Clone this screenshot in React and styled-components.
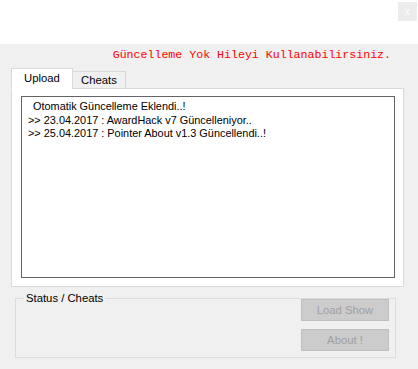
import React, { useState } from 'react';
import styled, { createGlobalStyle } from 'styled-components';

const GlobalStyle = createGlobalStyle`
  html, body {
    margin: 0;
    padding: 0;
    background: #f0f0f0;
  }
  body {
    font-family: "Liberation Sans", Arial, sans-serif;
    font-size: 11px;
    color: #000;
  }
`;

const Window = styled.div`
  width: 418px;
  height: 369px;
  display: flex;
  flex-direction: column;
  overflow: hidden;
`;

const TitleBar = styled.div`
  height: 44px;
  background: #fff;
  display: flex;
  justify-content: flex-end;
  align-items: flex-start;
  padding: 2px 1px 0 0;
  box-sizing: border-box;
`;

const CloseButton = styled.div`
  width: 19px;
  height: 19px;
  background: #ececec;
  color: #fbfbfb;
  font-size: 11px;
  display: flex;
  align-items: center;
  justify-content: center;
  line-height: 1;
`;

const Body = styled.div`
  flex: 1;
  background: #f0f0f0;
  display: flex;
  flex-direction: column;
  padding: 0 14px 0 11px;
`;

const Notice = styled.div`
  font-family: "Liberation Mono", "Courier New", monospace;
  font-size: 11.6px;
  color: #ff0000;
  text-align: right;
  padding: 4px 13px 0 0;
  height: 18px;
  line-height: 14px;
`;

const TabStrip = styled.div`
  display: flex;
  align-items: flex-end;
  height: 22px;
  position: relative;
  z-index: 1;
`;

const Tab = styled.div`
  box-sizing: border-box;
  height: ${p => (p.$active ? '21px' : '18px')};
  width: ${p => p.$w}px;
  background: ${p => (p.$active ? '#fff' : '#f0f0f0')};
  border: 1px solid #d9d9d9;
  border-bottom: ${p => (p.$active ? '1px solid #fff' : '1px solid #d9d9d9')};
  margin-bottom: -1px;
  margin-left: ${p => (p.$active ? '0' : '-1px')};
  display: flex;
  align-items: center;
  justify-content: center;
  padding-bottom: ${p => (p.$active ? '2px' : '0')};
  font-size: 11.3px;
  cursor: default;
`;

const Panel = styled.div`
  box-sizing: border-box;
  height: 199px;
  background: #fff;
  border: 1px solid #d9d9d9;
  padding: 7px 8px 8px 9px;
  display: flex;
`;

const LogBox = styled.div`
  flex: 1;
  border: 1px solid #646464;
  padding: 3px 6px 0 6px;
  font-size: 10.9px;
  line-height: 13.5px;
`;

const LogLine = styled.div`
  white-space: pre;
  padding-left: ${p => (p.$indent ? '5px' : '0')};
`;

const Group = styled.fieldset`
  box-sizing: border-box;
  margin: 5px 8px 0 4px;
  height: 66px;
  border: 1px solid #dcdcdc;
  padding: 0 6px 5px 6px;
  display: flex;
  flex-direction: column;
  align-items: flex-end;
  gap: 8px;
`;

const Legend = styled.legend`
  font-size: 11.3px;
  padding: 0 2px;
  margin-left: 2px;
`;

const GrayButton = styled.div`
  box-sizing: border-box;
  width: 88px;
  height: 22px;
  background: #cccccc;
  border: 1px solid #bfbfbf;
  color: #a0a0a0;
  font-size: 11.3px;
  display: flex;
  align-items: center;
  justify-content: center;
  margin-top: ${p => (p.$first ? '-5px' : '0')};
`;

const logs = [
  { text: 'Otomatik Güncelleme Eklendi..!', indent: true },
  { text: '>> 23.04.2017 : AwardHack v7 Güncelleniyor..' },
  { text: '>> 25.04.2017 : Pointer About v1.3 Güncellendi..!' },
];

export default function App() {
  const [tab, setTab] = useState('upload');
  return (
    <>
      <GlobalStyle />
      <Window>
        <TitleBar>
          <CloseButton>x</CloseButton>
        </TitleBar>
        <Body>
          <Notice>Güncelleme Yok Hileyi Kullanabilirsiniz.</Notice>
          <TabStrip>
            <Tab $w={62} $active={tab === 'upload'} onClick={() => setTab('upload')}>Upload</Tab>
            <Tab $w={54} $active={tab === 'cheats'} onClick={() => setTab('cheats')}>Cheats</Tab>
          </TabStrip>
          <Panel>
            <LogBox>
              {logs.map((l, i) => (
                <LogLine key={i} $indent={l.indent}>{l.text}</LogLine>
              ))}
            </LogBox>
          </Panel>
          <Group>
            <Legend>Status / Cheats</Legend>
            <GrayButton $first>Load Show</GrayButton>
            <GrayButton>About !</GrayButton>
          </Group>
        </Body>
      </Window>
    </>
  );
}
